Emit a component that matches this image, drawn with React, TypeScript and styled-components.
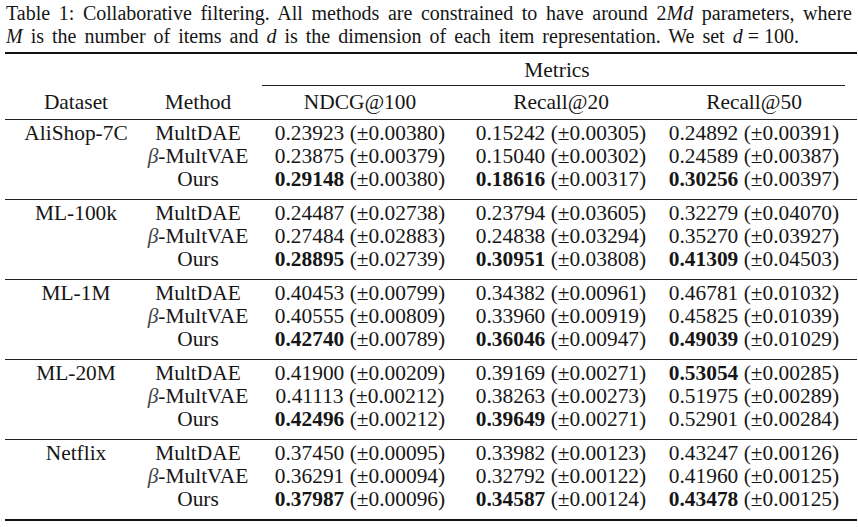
import React from 'react';
import styled, { createGlobalStyle } from 'styled-components';

const GlobalStyle = createGlobalStyle`
  html, body {
    margin: 0;
    padding: 0;
    background: #fff;
  }
  body {
    font-family: "Liberation Serif", "Times New Roman", serif;
    color: #161616;
  }
`;

const Page = styled.div`
  width: 858px;
  height: 527px;
  padding: 2px 0 0 5px;
  box-sizing: border-box;
  overflow: hidden;
`;

const Caption = styled.div`
  width: 846px;
  margin-left: 1px;
  font-size: 20px;
  line-height: 23px;
`;

const CaptionLine = styled.div<{ $justify?: boolean }>`
  white-space: nowrap;
  text-align: ${(p) => (p.$justify ? 'justify' : 'left')};
  text-align-last: ${(p) => (p.$justify ? 'justify' : 'left')};
  word-spacing: ${(p) => (p.$justify ? '0' : '3px')};
`;

const Var = styled.i`
  font-style: italic;
`;

const Rel = styled.span`
  margin: 0 5px;
`;

const Table = styled.div`
  width: 852px;
  margin-top: 4px;
  border-top: 2px solid #111;
  border-bottom: 2px solid #111;
  font-size: 21.4px;
`;

const Grid = styled.div`
  display: grid;
  grid-template-columns: 142px 102px 222px 180px 206px;
`;

const HeadRow = styled(Grid)<{ $h: number }>`
  height: ${(p) => p.$h}px;
  align-items: center;
`;

const MetricsCell = styled.div`
  grid-column: 3 / 6;
  align-self: stretch;
  display: flex;
  flex-direction: column;
  justify-content: center;
  text-align: center;
  padding-left: 20px;
  padding-right: 12px;
  position: relative;
`;

const CMidRule = styled.div`
  position: absolute;
  left: 13px;
  right: 12px;
  bottom: 0;
  border-bottom: 1px solid #222;
`;

const Cell = styled.div`
  text-align: center;
  white-space: nowrap;
  line-height: 23px;
`;

const Group = styled(Grid)`
  border-top: 1px solid #222;
  padding: 2px 0 8px;
  grid-auto-rows: 23px;
`;

const Beta = styled.i`
  font-style: italic;
  color: #444;
`;

type Val = [string, string, boolean?];

type Block = {
  name: string;
  rows: { method: 'dae' | 'vae' | 'ours'; vals: Val[] }[];
};

const data: Block[] = [
  {
    name: 'AliShop-7C',
    rows: [
      { method: 'dae', vals: [['0.23923', '0.00380'], ['0.15242', '0.00305'], ['0.24892', '0.00391']] },
      { method: 'vae', vals: [['0.23875', '0.00379'], ['0.15040', '0.00302'], ['0.24589', '0.00387']] },
      { method: 'ours', vals: [['0.29148', '0.00380', true], ['0.18616', '0.00317', true], ['0.30256', '0.00397', true]] },
    ],
  },
  {
    name: 'ML-100k',
    rows: [
      { method: 'dae', vals: [['0.24487', '0.02738'], ['0.23794', '0.03605'], ['0.32279', '0.04070']] },
      { method: 'vae', vals: [['0.27484', '0.02883'], ['0.24838', '0.03294'], ['0.35270', '0.03927']] },
      { method: 'ours', vals: [['0.28895', '0.02739', true], ['0.30951', '0.03808', true], ['0.41309', '0.04503', true]] },
    ],
  },
  {
    name: 'ML-1M',
    rows: [
      { method: 'dae', vals: [['0.40453', '0.00799'], ['0.34382', '0.00961'], ['0.46781', '0.01032']] },
      { method: 'vae', vals: [['0.40555', '0.00809'], ['0.33960', '0.00919'], ['0.45825', '0.01039']] },
      { method: 'ours', vals: [['0.42740', '0.00789', true], ['0.36046', '0.00947', true], ['0.49039', '0.01029', true]] },
    ],
  },
  {
    name: 'ML-20M',
    rows: [
      { method: 'dae', vals: [['0.41900', '0.00209'], ['0.39169', '0.00271'], ['0.53054', '0.00285', true]] },
      { method: 'vae', vals: [['0.41113', '0.00212'], ['0.38263', '0.00273'], ['0.51975', '0.00289']] },
      { method: 'ours', vals: [['0.42496', '0.00212', true], ['0.39649', '0.00271', true], ['0.52901', '0.00284']] },
    ],
  },
  {
    name: 'Netflix',
    rows: [
      { method: 'dae', vals: [['0.37450', '0.00095'], ['0.33982', '0.00123'], ['0.43247', '0.00126']] },
      { method: 'vae', vals: [['0.36291', '0.00094'], ['0.32792', '0.00122'], ['0.41960', '0.00125']] },
      { method: 'ours', vals: [['0.37987', '0.00096', true], ['0.34587', '0.00124', true], ['0.43478', '0.00125', true]] },
    ],
  },
];

const MethodName: React.FC<{ m: 'dae' | 'vae' | 'ours' }> = ({ m }) => {
  if (m === 'dae') return <>MultDAE</>;
  if (m === 'vae')
    return (
      <>
        <Beta>β</Beta>-MultVAE
      </>
    );
  return <>Ours</>;
};

const Value: React.FC<{ v: Val }> = ({ v }) => (
  <Cell>
    {v[2] ? <b>{v[0]}</b> : v[0]} (±{v[1]})
  </Cell>
);

export default function App() {
  return (
    <Page>
      <GlobalStyle />
      <Caption>
        <CaptionLine $justify>
          Table 1: Collaborative filtering. All methods are constrained to have around 2<Var>Md</Var> parameters, where
        </CaptionLine>
        <CaptionLine>
          <Var>M</Var> is the number of items and <Var>d</Var> is the dimension of each item representation. We set{' '}
          <Var>d</Var>
          <Rel>=</Rel>100.
        </CaptionLine>
      </Caption>
      <Table>
        <HeadRow $h={32}>
          <MetricsCell>
            Metrics
            <CMidRule />
          </MetricsCell>
        </HeadRow>
        <HeadRow $h={33}>
          <Cell>Dataset</Cell>
          <Cell>Method</Cell>
          <Cell>NDCG@100</Cell>
          <Cell>Recall@20</Cell>
          <Cell>Recall@50</Cell>
        </HeadRow>
        {data.map((block) => (
          <Group key={block.name}>
            {block.rows.map((row, i) => (
              <React.Fragment key={row.method}>
                <Cell>{i === 0 ? block.name : ''}</Cell>
                <Cell>
                  <MethodName m={row.method} />
                </Cell>
                {row.vals.map((v, j) => (
                  <Value key={j} v={v} />
                ))}
              </React.Fragment>
            ))}
          </Group>
        ))}
      </Table>
    </Page>
  );
}
